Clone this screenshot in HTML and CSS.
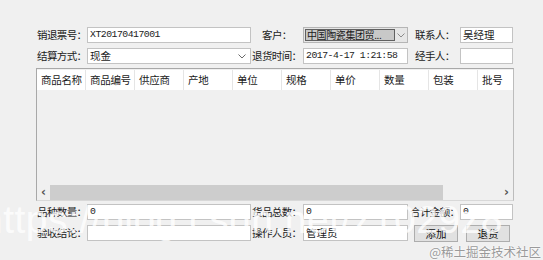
FILE: index.html
```html
<!DOCTYPE html>
<html>
<head>
<meta charset="utf-8">
<link rel="stylesheet" href="styles.css">
</head>
<body>
<div class="form">
  <div class="row">
    <span class="lbl">销退票号：</span>
    <div class="tb mono">XT20170417001</div>
    <span class="lbl l-cust">客户：</span>
    <div class="combo"><span class="sel">中国陶瓷集团贸...</span><span class="arr"><svg width="8" height="5" viewBox="0 0 8 5"><path d="M0.5 0.5 L4 4 L7.5 0.5" fill="none" stroke="#8a8a8a" stroke-width="1"/></svg></span></div>
    <span class="lbl l-right">联系人：</span>
    <div class="tb">吴经理</div>
  </div>
  <div class="row">
    <span class="lbl">结算方式：</span>
    <div class="tb dd"><span>现金</span><svg width="8" height="5" viewBox="0 0 8 5"><path d="M0.5 0.5 L4 4 L7.5 0.5" fill="none" stroke="#6a6a6a" stroke-width="1"/></svg></div>
    <span class="lbl l-mid">退货时间：</span>
    <div class="tb mono">2017-4-17 1:21:58</div>
    <span class="lbl l-right">经手人：</span>
    <div class="tb"></div>
  </div>
  <div class="grid">
    <div class="head">
      <span>商品名称</span><span>商品编号</span><span>供应商</span><span>产地</span><span>单位</span><span>规格</span><span>单价</span><span>数量</span><span>包装</span><span class="last">批号</span>
    </div>
    <div class="body"></div>
    <div class="hscroll">
      <span class="sarr">&lsaquo;</span>
      <span class="thumb"></span>
      <span class="track"></span>
      <span class="sarr">&rsaquo;</span>
    </div>
  </div>
  <div class="row">
    <span class="lbl">品种数量：</span>
    <div class="tb mono">0</div>
    <span class="lbl l-mid">货品总数：</span>
    <div class="tb mono">0</div>
    <span class="lbl l-sum">合计金额：</span>
    <div class="tb mono">0</div>
  </div>
  <div class="row row-last">
    <span class="lbl">验收结论：</span>
    <div class="tb"></div>
    <span class="lbl l-mid">操作人员：</span>
    <div class="tb">管理员</div>
    <div class="btns"><button class="btn">添加</button><button class="btn">退货</button></div>
  </div>
</div>
<div class="watermark">https://blog.csdn.net/z1029z8</div>
<div class="credit">@稀土掘金技术社区</div>
</body>
</html>
```

FILE: styles.css
```css
html, body {
  margin: 0;
  padding: 0;
  background: #f0f0f0;
  width: 543px;
  height: 260px;
  overflow: hidden;
  font-family: "Noto Sans CJK SC", "Liberation Sans", sans-serif;
  font-size: 10.5px;
  color: #1a1a1a;
  position: relative;
}

.form {
  padding: 27px 0 0 37px;
  width: 477px;
}

.row {
  display: grid;
  grid-template-columns: 50px 164px 52px 105px 52px 53px;
  height: 16px;
  align-items: center;
  margin-bottom: 5px;
}

.row-last {
  grid-template-columns: 50px 164px 52px 105px 106px;
}

.lbl {
  white-space: nowrap;
  line-height: 16px;
  letter-spacing: -0.6px;
}

.l-cust { padding-left: 11px; }
.l-mid { padding-left: 1px; }
.l-right { padding-left: 7px; }
.l-sum { padding-left: 2px; }

.tb {
  box-sizing: border-box;
  height: 16px;
  background: #fff;
  border: 1px solid #c3c3c3;
  padding-left: 2px;
  line-height: 14px;
  white-space: nowrap;
  overflow: hidden;
}

.mono {
  font-family: "Liberation Mono", monospace;
  font-size: 9.8px;
  letter-spacing: -0.5px;
  color: #222;
}

.dd {
  display: flex;
  align-items: center;
  justify-content: space-between;
  padding-right: 4px;
}

.combo {
  box-sizing: border-box;
  height: 16px;
  border: 1px solid #b5b5b5;
  background: #e6e6e6;
  display: flex;
  align-items: stretch;
  padding: 1px 0 1px 1px;
}

.combo .sel {
  flex: 1;
  min-width: 0;
  background: #c8c8c8;
  border: 1px solid #606060;
  line-height: 10px;
  font-size: 10px;
  letter-spacing: -0.4px;
  white-space: nowrap;
  padding-left: 1px;
}

.combo .arr {
  width: 12px;
  flex: none;
  display: flex;
  align-items: center;
  justify-content: center;
}

.grid {
  margin: -1px 0 3px -1px;
  width: 478px;
  height: 133px;
  box-sizing: border-box;
  border: 1px solid #a8a8a8;
  border-right-color: #bcbcbc;
  border-bottom-color: #d8d8d8;
  display: flex;
  flex-direction: column;
  background: #f0f0f0;
}

.head {
  display: flex;
  height: 20px;
  background: #fff;
  margin-top: 1px;
}

.head span {
  width: 49px;
  flex: none;
  box-sizing: border-box;
  border-right: 1px solid #e5e5e5;
  padding-left: 4px;
  line-height: 20px;
  white-space: nowrap;
  letter-spacing: -0.3px;
}

.head span.last {
  flex: 1;
  border-right: none;
}

.body {
  flex: 1;
}

.hscroll {
  height: 15px;
  display: flex;
  align-items: stretch;
  background: #f0f0f0;
}

.sarr {
  width: 13px;
  text-align: center;
  font-family: "DejaVu Sans", sans-serif;
  font-size: 12px;
  line-height: 14px;
  font-weight: bold;
  color: #555;
}

.thumb {
  width: 393px;
  background: #cdcdcd;
}

.track {
  flex: 1;
}

.btns {
  display: flex;
  gap: 8px;
  padding-left: 6px;
  height: 16px;
}

.btn {
  width: 44px;
  height: 17px;
  box-sizing: border-box;
  border: 1px solid #adadad;
  background: #e1e1e1;
  font-family: "Noto Sans CJK SC", sans-serif;
  font-size: 10.5px;
  padding: 0;
  line-height: 14px;
  color: #111;
}

.watermark {
  position: absolute;
  left: -19px;
  top: 198px;
  font-family: "Liberation Sans", sans-serif;
  font-size: 39px;
  color: rgba(255, 255, 255, 0.8);
  white-space: nowrap;
  letter-spacing: 0.5px;
  pointer-events: none;
}

.credit {
  position: absolute;
  right: 2px;
  top: 242px;
  font-family: "Noto Sans CJK SC", sans-serif;
  font-size: 12.5px;
  color: #9a9a9a;
  text-shadow: 0 0 2px #fff, 0 0 2px #fff;
  white-space: nowrap;
}
```
